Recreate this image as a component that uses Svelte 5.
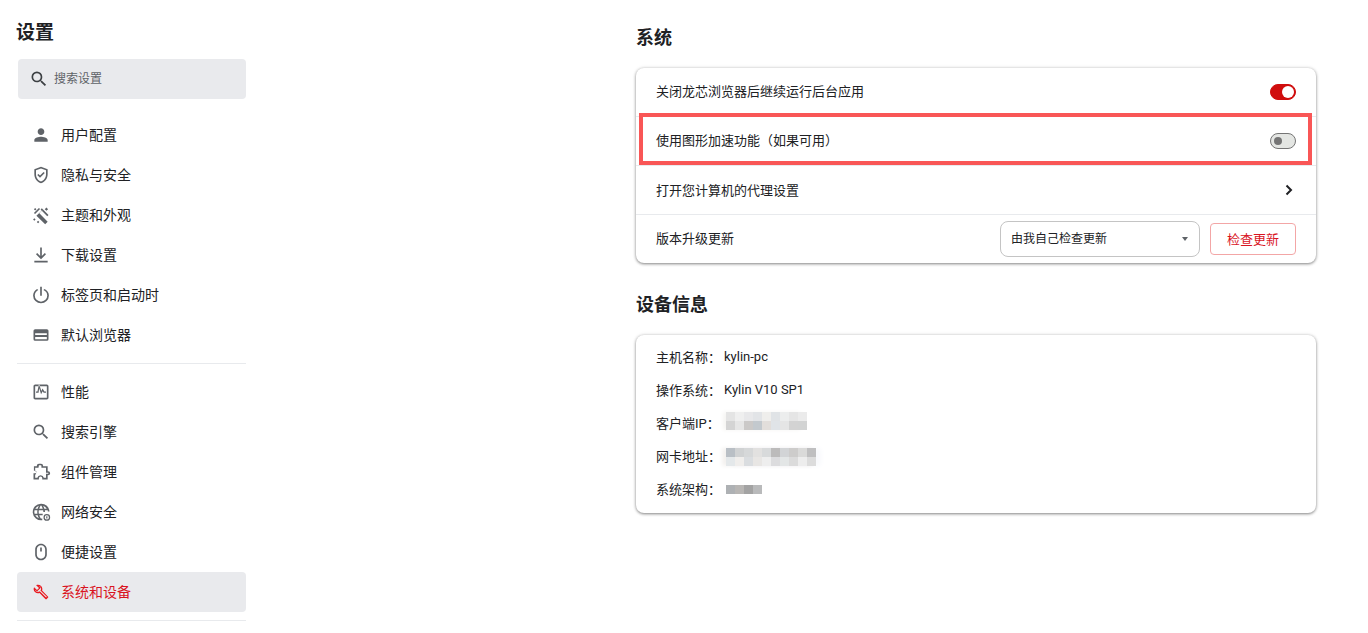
<script lang="ts">
  const ICONS: Record<string, string> = {
    person: 'M12 12c2.2 0 4-1.8 4-4s-1.8-4-4-4-4 1.8-4 4 1.8 4 4 4zm0 2c-2.7 0-8 1.3-8 4v2h16v-2c0-2.7-5.3-4-8-4z',
    search: 'M15.5 14h-.79l-.28-.27A6.47 6.47 0 0 0 16 9.5 6.5 6.5 0 1 0 9.5 16c1.61 0 3.09-.59 4.23-1.57l.27.28v.79l5 4.99L20.49 19l-4.99-5zm-6 0C7.01 14 5 11.99 5 9.5S7.01 5 9.5 5 14 7.01 14 9.5 11.99 14 9.5 14z',
    shield: 'M12 2 4 5v6.1c0 5 3.4 9.7 8 10.9 4.6-1.2 8-5.9 8-10.9V5l-8-3zm6 9.1c0 4-2.5 7.6-6 8.8-3.500-1.200-6-4.800-6-8.800V6.400l6-2.250 6 2.250v4.700zM8.900 10.700 7.500 12.100l3.300 3.300 5.700-5.700-1.400-1.400-4.300 4.300-1.900-1.900z',
    theme: 'M5 3.500 3.500 5 5 6.500 6.500 5zM18.500 3l-2 2 2 2 2-2zM9.500 3.500 3.500 9.500l1.400 1.400 6-6zM13 6.500 6.500 13 17 23l3-3L10 10l4.500-4.500zM4 16l-1.500 1.500L4 19l1.500-1.500zM8.500 19l-1.500 1.500L8.500 22l1.500-1.500zM13 4l8 8-1.500 1.500-8-8z',
    download: 'M11 3h2v10.200l3.600-3.600L18 11l-6 6-6-6 1.400-1.400 3.600 3.600V3zM4 19h16v2H4z',
    power: 'M11 2h2v11h-2zM16.300 4.700l-1.400 1.400A7.500 7.500 0 0 1 19.500 12.500a7.500 7.500 0 0 1-15 0c0-2.900 1.800-5.300 4.200-6.500L7.300 4.700A9.500 9.500 0 0 0 2.500 12.500a9.500 9.500 0 0 0 19 0c0-3.300-2-6.200-5.200-7.800z',
    browser: 'M5 5h14a2 2 0 0 1 2 2v10a2 2 0 0 1-2 2H5a2 2 0 0 1-2-2V7a2 2 0 0 1 2-2zm0 5v2h14v-2H5zm0 4.500V17h14v-2.500H5z',
    perf: 'M19 3H5c-1.100 0-2 .9-2 2v14c0 1.100.9 2 2 2h14c1.100 0 2-.9 2-2V5c0-1.100-.9-2-2-2zm0 16H5V5h14v14zM9.800 7.500l2.300 7.200 1.900-3.600 1.200 1.900h2.800v-1.700h-1.900l-2.200-3.400-1.500 2.900-2.800-8.700L7.700 11.300H6V13h3.100z',
    puzzle: 'M9.500 2A2.500 2.500 0 0 0 7 4.500V5H3.500v5.500H5a1.500 1.500 0 0 1 0 3H3V21h6.500v-1.500a2 2 0 0 1 4 0V21H20v-5h.5a2.500 2.500 0 0 0 0-5H20V5h-5.500v-.5A2.500 2.500 0 0 0 12 2zm0 2h2.500a.5.500 0 0 1 .500.500V7h5.500v6h2.500a.5.500 0 0 1 0 1H18v5h-2.600a4 4 0 0 0-7.800 0H5v-3.500a3.500 3.500 0 0 0 0-5V7h4z',
    globe: 'M12 2a10 10 0 1 0 1.500 19.900v-2c-.4.100-1 .100-1.500.100-.900-1.200-1.700-2.600-2.100-4H14v-2H9.400c-.1-.7-.2-1.300-.2-2s.1-1.400.2-2h5.200c.1.700.2 1.300.2 2h2c0-.7-.1-1.400-.2-2h3.400c.1.400.2.800.2 1.400h2A10 10 0 0 0 12 2zm0 2c.9 1.200 1.600 2.500 2.100 4H9.900c.5-1.500 1.200-2.800 2.100-4zM9.400 4.400C8.800 5.500 8.300 6.700 8 8H5.100a8 8 0 0 1 4.300-3.600zm5.200 0A8 8 0 0 1 18.900 8H16c-.3-1.300-.8-2.500-1.400-3.600zM4.300 10h3.400c-.1.700-.2 1.300-.2 2s.1 1.300.2 2H4.300a8 8 0 0 1 0-4zm.8 6H8c.3 1.300.8 2.500 1.400 3.600A8 8 0 0 1 5.100 16zM19 14.500a4 4 0 1 0 0 8 4 4 0 0 0 0-8zm0 1.500a2.500 2.500 0 1 1 0 5 2.500 2.500 0 0 1 0-5zm-.7 1.200v2.600h1.400v-2.600z',
    mouse: 'M12 2c-3.900 0-7 3.100-7 7v6c0 3.900 3.100 7 7 7s7-3.100 7-7V9c0-3.900-3.100-7-7-7zm0 2c2.800 0 5 2.200 5 5v6c0 2.800-2.200 5-5 5s-5-2.200-5-5V9c0-2.800 2.200-5 5-5zm-1 2.500v5h2v-5z',
    wrench: 'M22.700 19 13.600 9.900c.9-2.300.4-5-1.500-6.900-2-2-5-2.400-7.400-1.300L9 6 6 9 1.600 4.700C.4 7.100.9 10.100 2.900 12.100c1.900 1.900 4.600 2.400 6.900 1.500l9.100 9.100c.4.400 1 .4 1.400 0l2.300-2.300c.5-.4.500-1.100.1-1.400zm-3 1.300-9.600-9.600c-.8.600-1.500.9-2.300 1-1.400.2-2.600-.2-3.400-1-.6-.6-1-1.300-1.100-2l2.700 2.700 5.800-5.800-2.700-2.700c.7.100 1.400.5 2 1.100.8.800 1.200 2 1 3.400-.1.800-.4 1.500-1 2.300l9.600 9.600-1 1z'
  };

  const GROUP_A = [
    { label: '用户配置', icon: 'person' },
    { label: '隐私与安全', icon: 'shield' },
    { label: '主题和外观', icon: 'theme' },
    { label: '下载设置', icon: 'download' },
    { label: '标签页和启动时', icon: 'power' },
    { label: '默认浏览器', icon: 'browser' }
  ];
  const GROUP_B = [
    { label: '性能', icon: 'perf' },
    { label: '搜索引擎', icon: 'search' },
    { label: '组件管理', icon: 'puzzle' },
    { label: '网络安全', icon: 'globe' },
    { label: '便捷设置', icon: 'mouse' },
    { label: '系统和设备', icon: 'wrench', active: true }
  ];

  // mosaic cells standing in for the blurred-out values
  const IP_CELLS = ['#e4e4e4', '#efefef', '#e8e8ea', '#e2e4e7', '#efeeec', '#e0e3e6', '#eceded', '#e5e5e5', '#ebebeb',
    '#d4d4d4', '#e6e6e6', '#cbc9c8', '#c3c9ce', '#e2dedb', '#e0e4e8', '#e5e5e5', '#d3d3d3', '#d2d3d3'];
  const MAC_CELLS = ['#b9bfc5', '#d0d2d3', '#d6d8d9', '#e2e1e0', '#d8dadb', '#bcbbbb', '#d2d4d6', '#cdcccb', '#dadad9', '#bfbfc0',
    '#e4e8ea', '#f0eeec', '#dadde0', '#e8e6e4', '#eeeeee', '#dcdcde', '#e3e6e6', '#dbdbdb', '#ededed', '#dcdcdc'];
  const ARCH_CELLS = ['#aeb1b4', '#b8b6b4', '#a3a3a3', '#b9babb'];
</script>

{#snippet icon(name: string)}
  <svg class="icon" viewBox="0 0 24 24" aria-hidden="true"><path d={ICONS[name]} fill-rule="evenodd" /></svg>
{/snippet}

{#snippet navItem(item: { label: string; icon: string; active?: boolean })}
  <li class="nav-item" class:active={item.active}>
    {@render icon(item.icon)}
    <span>{item.label}</span>
  </li>
{/snippet}

<div class="page">
  <aside class="sidebar">
    <h1>设置</h1>
    <div class="search">
      {@render icon('search')}
      <span>搜索设置</span>
    </div>
    <ul class="first">
      {#each GROUP_A as item}{@render navItem(item)}{/each}
    </ul>
    <ul class="second">
      {#each GROUP_B as item}{@render navItem(item)}{/each}
    </ul>
  </aside>

  <main>
    <h2>系统</h2>
    <section class="card system">
      <div class="row"><span class="label">关闭龙芯浏览器后继续运行后台应用</span><span class="toggle on"></span></div>
      <div class="row"><span class="label">使用图形加速功能（如果可用）</span><span class="toggle"></span></div>
      <div class="row proxy">
        <span class="label">打开您计算机的代理设置</span>
        <svg class="chevron" viewBox="0 0 10 14" aria-hidden="true"><path d="M2.500 2.500 7 7l-4.500 4.500" /></svg>
      </div>
      <div class="row">
        <span class="label">版本升级更新</span>
        <div class="controls">
          <div class="select"><span class="label">由我自己检查更新</span><i class="caret"></i></div>
          <button><span class="label">检查更新</span></button>
        </div>
      </div>
      <div class="highlight"></div>
    </section>

    <h2 class="device-title">设备信息</h2>
    <section class="card device">
      <div class="info"><span class="key">主机名称：</span><span>kylin-pc</span></div>
      <div class="info"><span class="key">操作系统：</span><span>Kylin V10 SP1</span></div>
      <div class="info">
        <span class="key">客户端IP：</span>
        <div class="mosaic ip">{#each IP_CELLS as c}<b style:background={c}></b>{/each}</div>
      </div>
      <div class="info">
        <span class="key">网卡地址：</span>
        <div class="mosaic mac">{#each MAC_CELLS as c}<b style:background={c}></b>{/each}</div>
      </div>
      <div class="info">
        <span class="key">系统架构：</span>
        <div class="mosaic arch">{#each ARCH_CELLS as c}<b style:background={c}></b>{/each}</div>
      </div>
    </section>
  </main>
</div>

<style>
  :global(body) { background: #fff; overflow: hidden; }
  .page {
    display: flex;
    height: 633px;
    overflow: hidden;
    font-family: Roboto, "Noto Sans CJK SC", sans-serif;
    font-size: 13px;
    color: #202124;
  }

  .sidebar { width: 229px; margin-left: 17px; flex: none; }
  h1 { margin: 0 0 0 -1px; padding-top: 21px; font-size: 19px; line-height: 24px; font-weight: 700; }
  .search {
    display: flex;
    align-items: center;
    gap: 5px;
    height: 40px;
    margin: 14px 0 0 1px;
    padding: 0 0 3px 11px;
    box-sizing: border-box;
    background: #e9eaed;
    border-radius: 4px;
    font-size: 12px;
    color: #5f6368;
  }
  .search .icon { fill: #3c4043; width: 20px; height: 20px; margin-top: 3px; }

  ul { list-style: none; margin: 0; padding: 0; }
  .first { margin-top: 16px; padding-bottom: 8px; border-bottom: 1px solid #e8eaed; }
  .second { margin-top: 8px; padding-bottom: 8px; border-bottom: 1px solid #e8eaed; }
  .nav-item {
    display: flex;
    align-items: center;
    gap: 10px;
    height: 40px;
    padding-left: 14px;
    border-radius: 4px;
    font-size: 14px;
  }
  .nav-item span { margin-bottom: 2px; }
  .icon { width: 20px; height: 20px; fill: #5f6368; flex: none; }
  .nav-item.active { background: #e9eaed; color: #d9141f; }
  .nav-item.active .icon { fill: #e8191f; box-sizing: border-box; padding: 2px; }

  main { width: 680px; margin-left: 390px; flex: none; }
  h2 { margin: 0; padding-top: 26px; font-size: 18px; line-height: 24px; font-weight: 700; }
  .device-title { padding-top: 30px; }

  .card {
    position: relative;
    margin-top: 18px;
    background: #fff;
    border-radius: 8px;
    box-shadow: 0 1px 3px rgba(0, 0, 0, 0.45), 0 0 4px rgba(0, 0, 0, 0.1);
  }
  .row {
    display: flex;
    align-items: center;
    justify-content: space-between;
    height: 49px;
    padding: 0 20px;
    box-sizing: border-box;
    border-top: 1px solid #e8eaed;
  }
  .row:first-child { border-top: 0; height: 48px; }
  .label { margin-bottom: 3px; display: block; }
  .proxy .label { margin-bottom: 1px; }

  .toggle {
    position: relative;
    width: 26px;
    height: 16px;
    box-sizing: border-box;
    border-radius: 8px;
    background: #e4e6e3;
    border: 1px solid #757575;
  }
  .toggle::after {
    content: '';
    position: absolute;
    left: 3px;
    top: 3px;
    width: 8px;
    height: 8px;
    border-radius: 50%;
    background: #757575;
  }
  .toggle.on { background: #d00d0d; border-color: #d00d0d; }
  .toggle.on::after { left: 11px; top: 1px; width: 12px; height: 12px; background: #fff; }

  .chevron { width: 10px; height: 14px; margin-right: 2px; fill: none; stroke: #202124; stroke-width: 2; }

  .controls { display: flex; align-items: center; gap: 10px; }
  .select {
    display: flex;
    align-items: center;
    justify-content: space-between;
    width: 200px;
    height: 36px;
    box-sizing: border-box;
    padding: 0 11px 0 10px;
    border: 1px solid #c4c4c4;
    border-radius: 8px;
    font-size: 12px;
  }
  .caret { width: 0; height: 0; border: 3.500px solid transparent; border-top: 4px solid #5f6368; border-bottom: 0; }
  button {
    width: 86px;
    height: 32px;
    padding: 0;
    background: #fff;
    border: 1px solid #f3a6a6;
    border-radius: 4px;
    color: #d9141f;
    font: inherit;
  }
  button .label { margin-bottom: 2px; }

  .highlight {
    position: absolute;
    left: 3px;
    right: 4px;
    top: 45px;
    height: 52px;
    box-sizing: border-box;
    border: 4px solid #f95656;
  }

  .device { padding: 5px 20px 8px; font-size: 13px; }
  .info { display: flex; align-items: center; height: 33px; }
  .key { width: 68px; flex: none; }
  .mosaic { display: grid; grid-auto-rows: 9px; grid-auto-columns: 9px; margin-left: 2px; filter: blur(0.4px); }
  .mosaic b { display: block; }
  .ip { grid-template-columns: repeat(9, 9px); margin-top: -3px; border-radius: 0 8px 8px 0; box-shadow: -3px 0 4px #f5f4f2; }
  .mac { grid-template-columns: repeat(10, 9px); margin-top: 3px; box-shadow: -4px 0 4px #f3f1ef, 5px 0 5px #f8f9fc; }
  .arch { grid-template-columns: repeat(4, 9px); margin-top: 1px; }
</style>
